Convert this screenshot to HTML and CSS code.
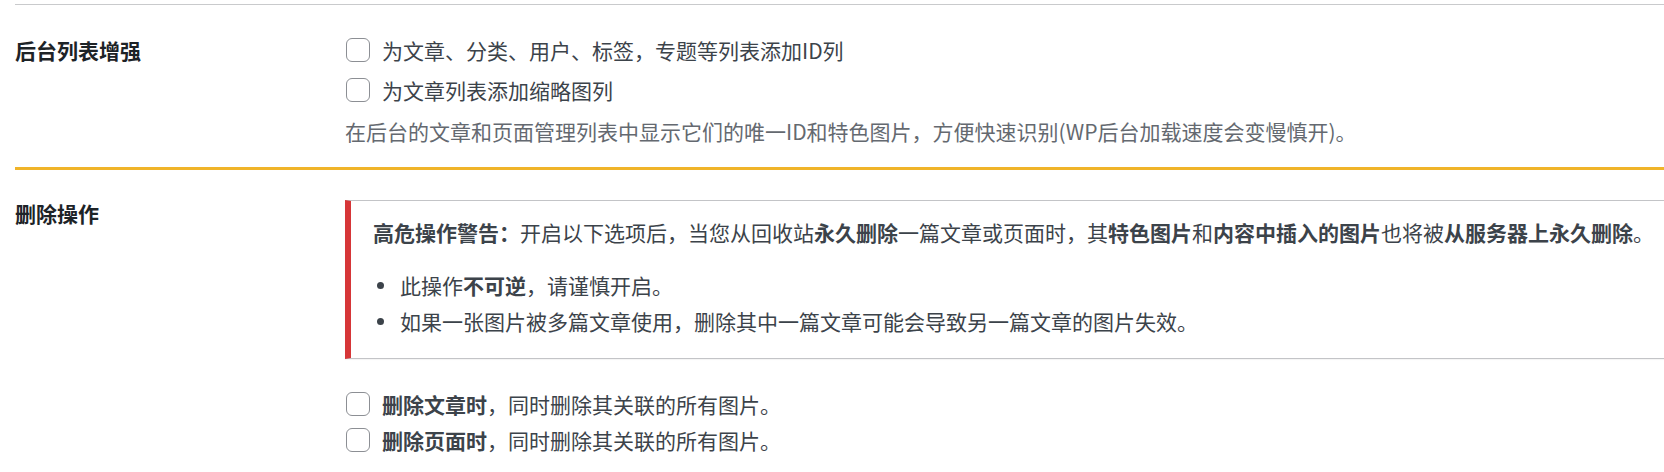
FILE: index.html
```html
<!doctype html>
<html lang="zh-CN">

<head>
    <meta charset="utf-8">
    <title>设置</title>
    <link rel="stylesheet" href="styles.css">
</head>

<body>
    <div class="wrap">
        <!-- 后台列表增强 -->
        <div class="section section-list">
            <div class="field-label">后台列表增强</div>
            <div class="field-body">
                <label class="check"><span class="box"></span>为文章、分类、用户、标签，专题等列表添加ID列</label>
                <label class="check"><span class="box"></span>为文章列表添加缩略图列</label>
                <p class="description">在后台的文章和页面管理列表中显示它们的唯一ID和特色图片，方便快速识别(WP后台加载速度会变慢慎开)。</p>
            </div>
        </div>

        <!-- 删除操作 -->
        <div class="section section-danger">
            <div class="field-label">删除操作</div>
            <div class="field-body">
                <div class="notice">
                    <p><b>高危操作警告：</b>开启以下选项后，当您从回收站<b>永久删除</b>一篇文章或页面时，其<b>特色图片</b>和<b>内容中插入的图片</b>也将被<b>从服务器上永久删除</b>。</p>
                    <ul>
                        <li>此操作<b>不可逆</b>，请谨慎开启。</li>
                        <li>如果一张图片被多篇文章使用，删除其中一篇文章可能会导致另一篇文章的图片失效。</li>
                    </ul>
                </div>
                <div class="checks-after">
                    <label class="check check-tight"><span class="box"></span><b>删除文章时</b>，同时删除其关联的所有图片。</label>
                    <label class="check check-tight"><span class="box"></span><b>删除页面时</b>，同时删除其关联的所有图片。</label>
                </div>
            </div>
        </div>
    </div>
</body>

</html>
```

FILE: styles.css
```css
html, body {
    margin: 0;
    padding: 0;
    background: #fff;
    overflow: hidden;
}

body {
    font-family: "Noto Sans CJK SC", "Noto Sans", sans-serif;
    font-size: 21px;
    color: #3c434a;
}

.wrap {
    padding-top: 4px;
    padding-left: 15px;
}

.section {
    display: grid;
    grid-template-columns: 330px 1fr;
}

.section-list {
    border-top: 1px solid #c9cacc;
}

.section-danger {
    border-top: 3px solid #f0b429;
}

.field-label {
    font-weight: 700;
    color: #1d2327;
    line-height: 28px;
}

.section-list .field-label {
    padding-top: 31px;
}

.section-danger .field-label {
    padding-top: 29px;
}

.section-list .field-body {
    padding: 25px 0 21px 0;
}

.section-danger .field-body {
    padding-top: 30px;
    min-width: 0;
}

.check {
    display: flex;
    align-items: center;
    height: 40px;
    white-space: nowrap;
}

.check-tight {
    height: 36px;
}

.check b {
    color: #3c434a;
}

.box {
    box-sizing: border-box;
    width: 24px;
    height: 24px;
    border: 1px solid #8c8f94;
    border-radius: 6px;
    background: #fff;
    margin-left: 1px;
    margin-right: 12px;
    flex: none;
}

.description {
    margin: 6px 0 0 0;
    line-height: 30px;
    color: #646970;
}

.notice {
    margin-right: -60px;
    background: #fff;
    border: 1px solid #c3c4c7;
    border-left: 6px solid #d63638;
    box-shadow: 0 1px 1px rgba(0, 0, 0, .04);
    padding: 16px 20px 19px 22px;
    white-space: nowrap;
}

.notice p {
    margin: 0;
    line-height: 30px;
}

.notice ul {
    list-style: none;
    margin: 20px 0 0 0;
    padding: 0;
}

.notice li {
    display: flex;
    align-items: center;
    line-height: 36px;
}

.notice li::before {
    content: "";
    width: 7px;
    height: 7px;
    border-radius: 50%;
    background: #3c434a;
    margin-left: 4px;
    margin-right: 16px;
    flex: none;
}

.checks-after {
    margin-top: 27px;
}
```
